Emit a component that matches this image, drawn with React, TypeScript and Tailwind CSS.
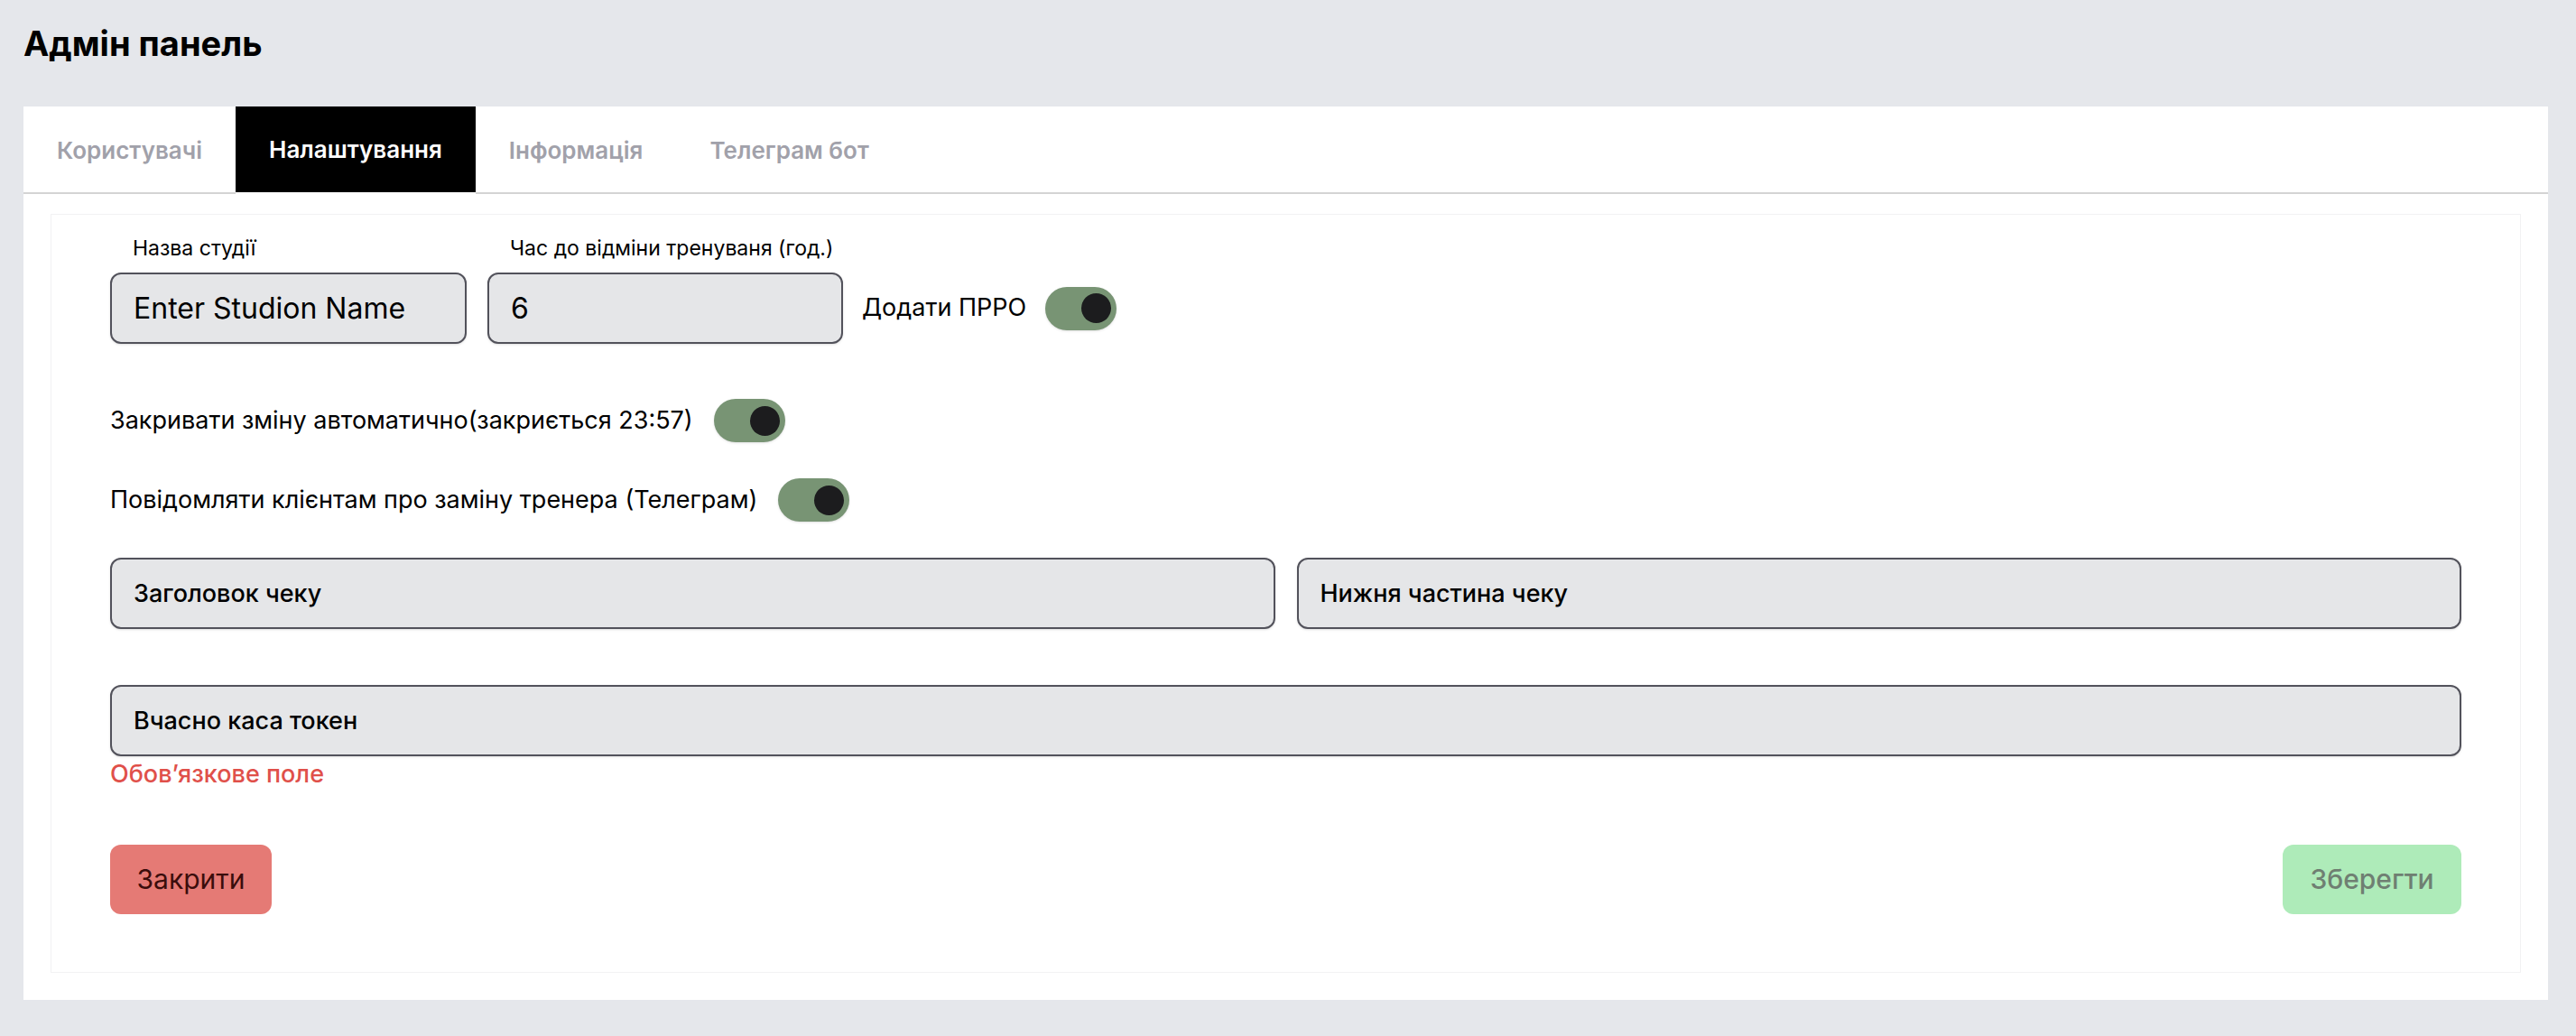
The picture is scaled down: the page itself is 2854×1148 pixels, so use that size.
import { useState } from 'react';

const tabs = ['Користувачі', 'Налаштування', 'Інформація', 'Телеграм бот'];

function Toggle({ on = true }: { on?: boolean }) {
  return (
    <div
      className={`w-[79px] h-[48px] rounded-full flex items-center px-[6px] shadow-sm shrink-0 ${
        on ? 'bg-[#789474] justify-end' : 'bg-[#d4d4d8] justify-start'
      }`}
    >
      <div className="w-[33px] h-[33px] rounded-full bg-[#1c1c1e]" />
    </div>
  );
}

function Field({ value, className = '', bold = false }: { value: string; className?: string; bold?: boolean }) {
  return (
    <input
      readOnly
      value={value}
      className={`h-[79px] rounded-[12px] border-2 border-[#52525b] bg-[#e5e6e8] px-[24px] text-black outline-none shadow-sm ${
        bold ? 'text-[27px] font-medium' : 'text-[32px]'
      } ${className}`}
    />
  );
}

export default function App() {
  const [active, setActive] = useState(1);

  return (
    <div className="min-h-screen bg-[#e5e7eb] pl-[26px] pr-[31px] pb-[41px] font-['Inter','Noto_Sans',sans-serif] text-black">
      {/* Header */}
      <h1 className="pt-[28px] h-[118px] text-[38px] leading-[40px] font-bold">Адмін панель</h1>

      {/* Panel */}
      <div className="bg-white pb-[30px]">
        {/* Tabs */}
        <div className="flex border-b-2 border-[#d4d4d4]">
          {tabs.map((t, i) => (
            <button
              key={t}
              onClick={() => setActive(i)}
              className={`h-[97px] -mb-[2px] px-[37px] text-[26px] font-semibold ${
                i === active ? 'bg-black text-white border-b-2 border-white' : 'text-[#a1a1aa]'
              }`}
            >
              {t}
            </button>
          ))}
        </div>

        <div className="px-[30px] pt-[22px]">
          <div className="border border-[#f2f2f3] px-[65px] pt-[22px] pb-[64px]">
            {/* Row 1 */}
            <div className="flex items-end">
              <div className="flex flex-col gap-[12px]">
                <label className="pl-[25px] text-[23px] leading-[30px]">Назва студії</label>
                <Field value="Enter Studion Name" className="w-[395px]" />
              </div>
              <div className="flex flex-col gap-[12px] ml-[23px]">
                <label className="pl-[25px] text-[23px] leading-[30px]">Час до відміни тренуваня (год.)</label>
                <Field value="6" className="w-[394px]" />
              </div>
              <div className="flex items-center h-[79px] ml-[21px] gap-[21px]">
                <span className="text-[27px]">Додати ПРРО</span>
                <Toggle />
              </div>
            </div>

            {/* Row 2 */}
            <div className="flex items-center gap-[23px] mt-[61px]">
              <span className="text-[27px]">Закривати зміну автоматично(закриється 23:57)</span>
              <Toggle />
            </div>

            {/* Row 3 */}
            <div className="flex items-center gap-[23px] mt-[40px]">
              <span className="text-[27px]">Повідомляти клієнтам про заміну тренера (Телеграм)</span>
              <Toggle />
            </div>

            {/* Receipt */}
            <div className="grid grid-cols-2 gap-[24px] mt-[40px]">
              <Field value="Заголовок чеку" bold />
              <Field value="Нижня частина чеку" bold />
            </div>

            {/* Token */}
            <div className="mt-[62px] flex flex-col">
              <Field value="Вчасно каса токен" bold />
              <span className="mt-[4px] text-[27px] leading-[32px] font-medium text-[#e0504a]">Обов’язкове поле</span>
            </div>

            {/* Actions */}
            <div className="flex justify-between mt-[62px]">
              <button className="w-[179px] h-[77px] rounded-[12px] bg-[#e57a75] text-[30px] text-[#3b0d0c]">Закрити</button>
              <button className="w-[198px] h-[77px] rounded-[12px] bg-[#aeebb9] text-[30px] font-medium text-[#6f7f72]">Зберегти</button>
            </div>
          </div>
        </div>
      </div>
    </div>
  );
}
